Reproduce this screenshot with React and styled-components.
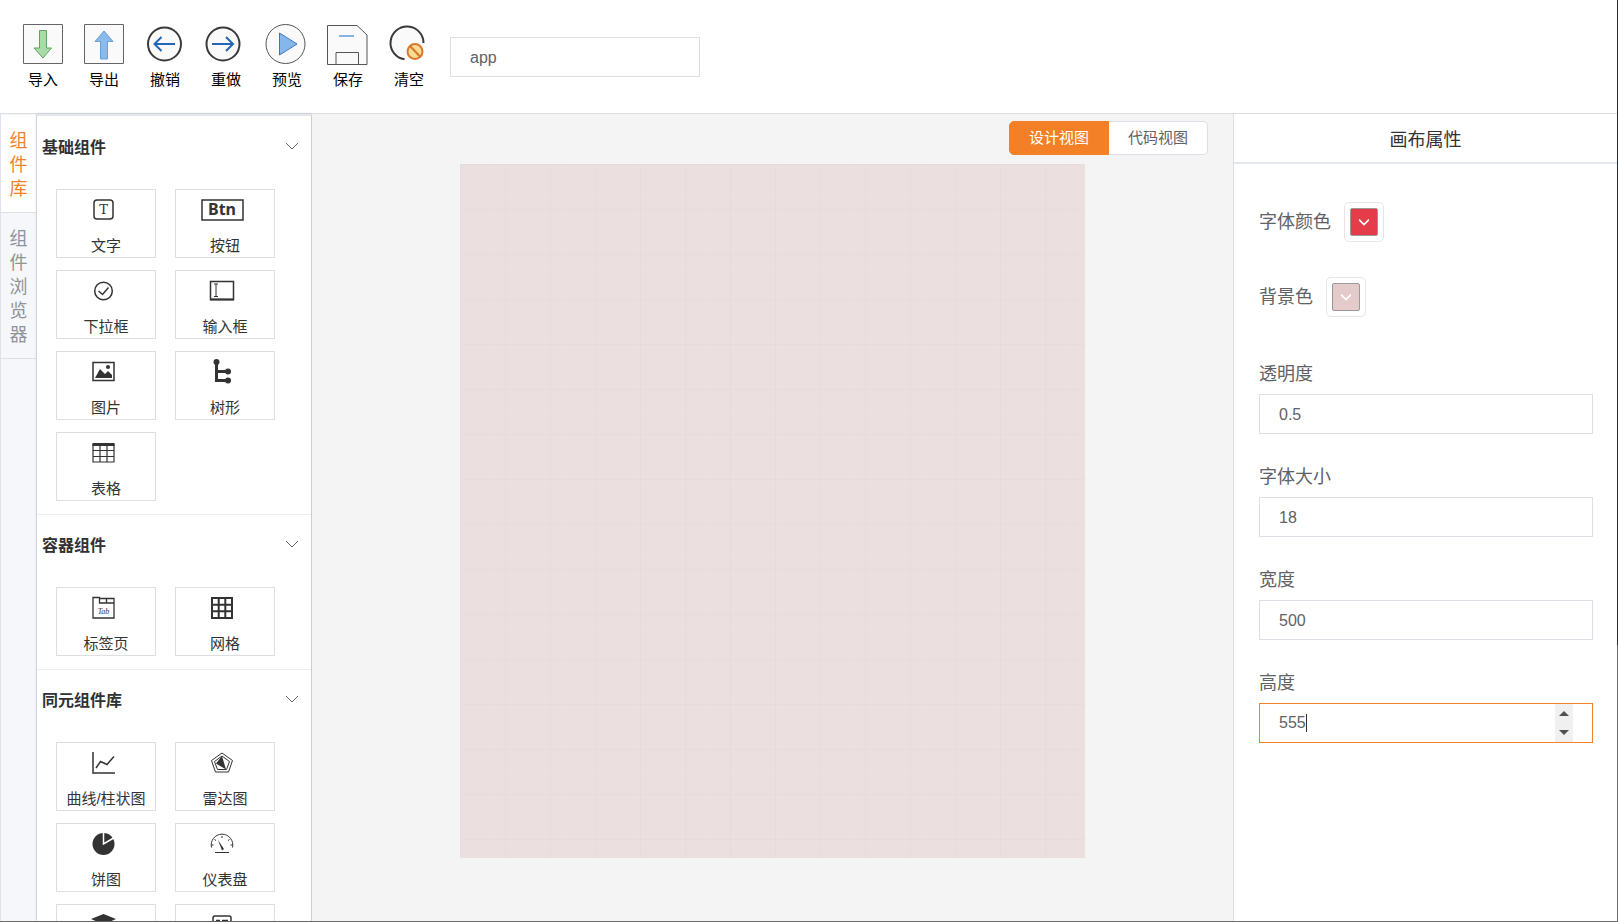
import { useState } from "react";
import styled, { createGlobalStyle } from "styled-components";

const GlobalStyle = createGlobalStyle`
  * {
    box-sizing: border-box;
  }
  body {
    margin: 0;
    overflow: hidden;
    color: #303133;
    font-family: "Liberation Sans", "Noto Sans CJK SC", sans-serif;
  }
  button, input {
    font-family: inherit;
  }
  h2, h3 {
    margin: 0;
  }
`;

const Page = styled.div`
  height: 100vh;
  display: flex;
  flex-direction: column;
  padding: 0 1px 1px 0;
  background: linear-gradient(#1f2d52 70%, #6b6b6b 70%);
`;

const Header = styled.header`
  display: flex;
  align-items: center;
  gap: 21px;
  height: 114px;
  flex-shrink: 0;
  padding: 1px 23px 0;
  background: #fff;
  border-bottom: 1px solid #dcdfe0;
`;

const Toolbar = styled.nav`
  display: flex;
  gap: 21px;
`;

const Tool = styled.button`
  display: flex;
  flex-direction: column;
  align-items: center;
  gap: 5px;
  width: 40px;
  padding: 0;
  border: none;
  background: none;
  color: #000;
  font-size: 15px;
  line-height: 22px;
  white-space: nowrap;
  cursor: pointer;
  svg {
    overflow: visible;
  }
`;

const TextInput = styled.input`
  width: ${({ $width }) => $width || "100%"};
  height: 40px;
  padding: 1px 19px 0;
  border: 1px solid #dcdfe6;
  outline: none;
  background: #fff;
  color: #606266;
  font-size: 16px;
`;

const Main = styled.div`
  flex: 1;
  min-height: 0;
  display: flex;
`;

const SideTabs = styled.div`
  width: 37px;
  flex-shrink: 0;
  padding-top: 1px;
  background: #f5f7fa;
  border-left: 1px solid #dfe2ea;
  border-right: 1px solid #dfe2ea;
`;

const SideTab = styled.button`
  display: block;
  width: 100%;
  padding: 14px 8px 11px;
  border: none;
  border-bottom: 1px solid #dcdfe6;
  background: ${({ $active }) => ($active ? "#fff" : "transparent")};
  color: ${({ $active }) => ($active ? "#f37f27" : "#909399")};
  font-size: 18px;
  line-height: 24px;
  word-break: break-all;
  cursor: pointer;
`;

const Library = styled.aside`
  width: 275px;
  flex-shrink: 0;
  overflow: hidden;
  padding-top: 1px;
  background: #fff;
  border-top: 2px solid #e4e7ed;
  border-right: 1px solid #cfcfd1;
  box-shadow: 0 0 3px rgba(0, 0, 0, 0.15);
`;

const Section = styled.section`
  padding-bottom: 13px;
  border-bottom: 1px solid #ebeef5;
`;

const SectionHead = styled.button`
  display: flex;
  align-items: center;
  justify-content: space-between;
  width: 100%;
  height: 57px;
  padding: 0 13px 0 5px;
  border: none;
  background: none;
  color: #303133;
  font-size: 16px;
  font-weight: 700;
  cursor: pointer;
`;

const Parts = styled.div`
  display: grid;
  grid-template-columns: 100px 100px;
  gap: 12px 19px;
  padding: 15px 0 0 19px;
`;

const Part = styled.button`
  display: flex;
  flex-direction: column;
  justify-content: space-between;
  height: 69px;
  padding: 0;
  border: 1px solid #dcdfe0;
  background: #fff;
  color: #333;
  font-size: 15px;
  line-height: 22px;
  cursor: grab;
`;

const PartIcon = styled.span`
  display: flex;
  align-items: center;
  justify-content: center;
  width: 100%;
  height: 40px;
  padding-right: 6px;
  svg {
    overflow: visible;
  }
`;

const PartLabel = styled.span`
  width: 100%;
  text-align: center;
`;

const Stage = styled.main`
  flex: 1;
  min-width: 0;
  display: flex;
  flex-direction: column;
  align-items: center;
  background: #f4f4f4;
`;

const ViewSwitch = styled.div`
  display: flex;
  align-self: flex-end;
  margin: 7px 25px 9px 0;
`;

const ViewButton = styled.button`
  height: 34px;
  padding: 0 19px;
  border: 1px solid ${({ $active }) => ($active ? "#f37f27" : "#dcdfe6")};
  border-left-width: ${({ $active }) => ($active ? "1px" : "0")};
  border-radius: ${({ $active }) => ($active ? "5px 0 0 5px" : "0 5px 5px 0")};
  background: ${({ $active }) => ($active ? "#f37f27" : "#fff")};
  color: ${({ $active }) => ($active ? "#fff" : "#606266")};
  font-size: 15px;
  line-height: 22px;
  cursor: pointer;
`;

const Canvas = styled.div`
  width: 625px;
  max-width: 100%;
  height: 694px;
  background-color: #ecdfdf;
  background-image: linear-gradient(90deg, #e5dddd 1px, transparent 1px),
    linear-gradient(#e3dddd 1px, transparent 1px),
    linear-gradient(90deg, rgba(225, 218, 218, 0.1) 1px, transparent 1px),
    linear-gradient(rgba(225, 218, 218, 0.1) 1px, transparent 1px);
  background-size: 45px 45px, 45px 45px, 9px 9px, 9px 9px;
`;

const Props = styled.aside`
  width: 384px;
  flex-shrink: 0;
  background: #fff;
  border-left: 1px solid #dcdfe0;
`;

const PropsTitle = styled.h2`
  height: 50px;
  padding-top: 2px;
  border-bottom: 2px solid #e4e7ed;
  color: #303133;
  font-size: 18px;
  font-weight: 400;
  line-height: 48px;
  text-align: center;
`;

const Form = styled.form`
  padding: 38px 24px 0 25px;
`;

const ColorRow = styled.div`
  display: flex;
  align-items: center;
  gap: 13px;
  height: 40px;
  margin-bottom: 35px;
  color: #606266;
  font-size: 18px;
  line-height: 24px;
`;

const Picker = styled.button`
  width: 40px;
  height: 40px;
  padding: 5px;
  border: 1px solid #e6e6e6;
  border-radius: 5px;
  background: #fff;
  cursor: pointer;
`;

const Swatch = styled.span`
  display: flex;
  align-items: center;
  justify-content: center;
  height: 28px;
  border: 1px solid #999;
  border-radius: 2px;
  background: ${({ $color }) => $color};
`;

const Field = styled.div`
  margin-bottom: 21px;
`;

const FieldLabel = styled.label`
  display: block;
  padding-top: 2px;
  color: #606266;
  font-size: 18px;
  line-height: 40px;
`;

const NumberBox = styled.div`
  display: flex;
  align-items: center;
  height: 40px;
  padding: 0 19px;
  border: 1px solid #f37f27;
`;

// the input grows with its value, its right edge is the text cursor
const NumberInput = styled.input`
  field-sizing: content;
  height: 18px;
  margin-right: auto;
  padding: 0;
  border: none;
  border-right: 1px solid #303133;
  outline: none;
  color: #606266;
  caret-color: transparent;
  font-size: 16px;
`;

const Spinner = styled.div`
  display: flex;
  flex-direction: column;
  align-self: stretch;
  width: 18px;
  background: #f0f0f0;
`;

const SpinButton = styled.button`
  flex: 1;
  display: flex;
  align-items: center;
  justify-content: center;
  padding: 0;
  border: none;
  background: none;
`;

const Chevron = ({ size = 12, width = 1, color = "#606266" }) => (
  <svg width={size} height={size} viewBox="0 0 12 12" fill="none" stroke={color} strokeWidth={width}>
    <path d="M0 3l6 6 6-6" />
  </svg>
);

const Icon = ({ width = 24, children }) => (
  <svg
    width={width}
    height="24"
    viewBox={`0 0 ${width} 24`}
    fill="none"
    stroke="#333"
    strokeWidth="1.5"
  >
    {children}
  </svg>
);

const ToolIcon = ({ children }) => (
  <svg width="40" height="40" viewBox="0 0 40 40" fill="none">
    {children}
  </svg>
);

const tools = [
  {
    label: "导入",
    icon: (
      <>
        <path d="M.5.5h39v39H.5z" fill="#fafafa" stroke="#666" />
        <path d="M16.5 6.5h7V24h5L20 34l-9-10h5.5z" fill="#a8dba8" stroke="#5fa663" />
      </>
    ),
  },
  {
    label: "导出",
    icon: (
      <>
        <path d="M.5.5h39v39H.5z" fill="#fafafa" stroke="#666" />
        <path d="M16.5 35h7V17.5h5.5L20 7l-9 10.5h5.5z" fill="#8abaea" stroke="#6a9fd6" />
      </>
    ),
  },
  {
    label: "撤销",
    icon: (
      <>
        <circle cx="19.5" cy="20" r="16.5" fill="#fafafa" stroke="#3a3a3a" strokeWidth="2" />
        <path d="M30 20H9.5M16.500 13l-7 7 7 7" stroke="#2366b5" strokeWidth="2" />
      </>
    ),
  },
  {
    label: "重做",
    icon: (
      <>
        <circle cx="17" cy="20" r="16.5" fill="#fafafa" stroke="#3a3a3a" strokeWidth="2" />
        <path d="M6 20h21M20 13l7 7-7 7" stroke="#2366b5" strokeWidth="2" />
      </>
    ),
  },
  {
    label: "预览",
    icon: (
      <>
        <circle cx="18.5" cy="20" r="19.5" fill="#fafafa" stroke="#555" />
        <path d="M12.5 9v22L30 20z" fill="#86b7ea" stroke="#3a78c2" />
      </>
    ),
  },
  {
    label: "保存",
    icon: (
      <>
        <path d="M-.5 1.5H29l10 9.500v29.500H-.5z" fill="#fafafa" stroke="#555" />
        <path d="M8 40V28.500h22.500V40" stroke="#555" />
        <path d="M11 12h15" stroke="#86b4de" strokeWidth="2" />
      </>
    ),
  },
  {
    label: "清空",
    icon: (
      <>
        <circle cx="18" cy="19" r="16.5" fill="#fafafa" />
        <path d="M34.5 19A16.500 16.500 0 1 0 15.500 35.300" stroke="#3a3a3a" strokeWidth="2" />
        <circle cx="26" cy="27.5" r="9.5" fill="#fff" />
        <circle cx="26" cy="27.5" r="7.5" fill="#f7dc96" stroke="#d9772a" strokeWidth="2" />
        <path d="M21 22l10.500 11" stroke="#d9772a" strokeWidth="2" />
      </>
    ),
  },
];

const sections = [
  {
    title: "基础组件",
    parts: [
      {
        label: "文字",
        icon: (
          <Icon>
            <rect x="3" y="2" width="19" height="19" rx="3" />
            <text x="12.5" y="16" textAnchor="middle" fontSize="13" fontFamily="DejaVu Serif" fill="#333" stroke="none">
              T
            </text>
          </Icon>
        ),
      },
      {
        label: "按钮",
        icon: (
          <Icon width={44}>
            <rect x="2" y="2" width="41" height="20" />
            <text x="22" y="17" textAnchor="middle" fontSize="16" fontWeight="700" fontFamily="Noto Sans" fill="#333" stroke="none">
              Btn
            </text>
          </Icon>
        ),
      },
      {
        label: "下拉框",
        icon: (
          <Icon>
            <circle cx="12.5" cy="12" r="8.8" />
            <path d="M7.5 12l4 3.500 6-7" />
          </Icon>
        ),
      },
      {
        label: "输入框",
        icon: (
          <Icon width={26}>
            <path d="M1.5 2.5h23v18h-23z" />
            <path d="M1 20.5h24" strokeWidth="2" />
            <path d="M5 5h4M5 17.500h4M7 5v12.500" strokeWidth="1" />
          </Icon>
        ),
      },
      {
        label: "图片",
        icon: (
          <Icon>
            <path d="M2 2.500h21v18H2z" />
            <path d="M4 18l5-9 5 5 3-3 4 4v3z" fill="#333" stroke="none" />
            <circle cx="17" cy="7" r="2" fill="#333" stroke="none" />
          </Icon>
        ),
      },
      {
        label: "树形",
        icon: (
          <Icon>
            <path d="M6.500 2v18.500h11M6.500 11.500h11" strokeWidth="3" />
            <g fill="#333" stroke="none">
              <circle cx="6.500" cy="2" r="3" />
              <circle cx="18" cy="11.500" r="3" />
              <circle cx="18" cy="20.500" r="3" />
            </g>
          </Icon>
        ),
      },
      {
        label: "表格",
        icon: (
          <Icon>
            <path d="M1.500 3.500h22" strokeWidth="3" />
            <path d="M2 3v18h21V3M2 9.500h21M2 15.500h21M9 3v18M16 3v18" strokeWidth="1.200" />
          </Icon>
        ),
      },
    ],
  },
  {
    title: "容器组件",
    parts: [
      {
        label: "标签页",
        icon: (
          <Icon>
            <path d="M2 1.500h6.500v5.500H23V22H2zM8.500 2.500H23V7M15.500 2.500V7" strokeWidth="1.300" />
            <text x="12.500" y="18" textAnchor="middle" fontSize="8" fontStyle="italic" fontFamily="Liberation Serif" fill="#333" stroke="none">
              Tab
            </text>
          </Icon>
        ),
      },
      {
        label: "网格",
        icon: (
          <Icon>
            <path d="M2 2h20v20H2zM8.700 2v20M15.300 2v20M2 8.700h20M2 15.300h20" strokeWidth="2" />
          </Icon>
        ),
      },
    ],
  },
  {
    title: "同元组件库",
    parts: [
      {
        label: "曲线/柱状图",
        icon: (
          <Icon>
            <path d="M2 1v21h22M5 17l4.500-6.500 6.500 3 7-8" />
          </Icon>
        ),
      },
      {
        label: "雷达图",
        icon: (
          <Icon>
            <path d="M12 2l10.500 7.500L18.500 21h-13L1.500 9.500z" strokeWidth="1" />
            <path d="M12 5l7.500 5.500-3 8h-9l-3-8z" strokeWidth="1" />
            <path d="M12 5l4 13.500L6 12.500z" fill="#333" stroke="none" />
          </Icon>
        ),
      },
      {
        label: "饼图",
        icon: (
          <Icon>
            <circle cx="12.500" cy="12" r="11" fill="#333" stroke="none" />
            <path d="M12.500 0v12l11-6.500" stroke="#fff" strokeWidth="1.500" />
          </Icon>
        ),
      },
      {
        label: "仪表盘",
        icon: (
          <Icon>
            <path d="M1.500 15.500a10.800 10.800 0 1 1 21 0M5 20.500h14" strokeWidth="1" />
            <path d="M12 4v2M4.500 7.500l1.500 1M19.500 7.500l-1.500 1M1.500 13h2M20.500 13h2" strokeWidth="1" />
            <path d="M8 8l6 9-2 1.500z" fill="#333" stroke="none" />
          </Icon>
        ),
      },
      {
        name: "layers",
        icon: (
          <Icon>
            <path d="M12.500 1L25 6l-12.500 5.500L0 6zM0 10l12.500 6L25 10v2.500l-12.500 6L0 12.500z" fill="#333" stroke="none" />
          </Icon>
        ),
      },
      {
        name: "list",
        icon: (
          <Icon>
            <rect x="3" y="3" width="18" height="18" rx="2" />
            <path d="M6 7.500h4M12 7.500h6M8 8v10M12 12h6" />
          </Icon>
        ),
      },
    ],
  },
];

const colors = [
  { id: "fontColor", label: "字体颜色", color: "#e43d49" },
  { id: "background", label: "背景色", color: "#e4caca" },
];

const fields = [
  { id: "opacity", label: "透明度" },
  { id: "fontSize", label: "字体大小" },
  { id: "width", label: "宽度" },
];

export default function App() {
  const [name, setName] = useState("app");
  const [tab, setTab] = useState("组件库");
  const [view, setView] = useState("设计视图");
  const [values, setValues] = useState({
    opacity: "0.5",
    fontSize: "18",
    width: "500",
    height: "555",
  });

  const change = (id, value) => setValues((prev) => ({ ...prev, [id]: value }));
  const step = (n) => change("height", String(Number(values.height) + n));

  return (
    <>
      <GlobalStyle />
      <Page>
        <Header>
          <Toolbar>
            {tools.map((tool) => (
              <Tool key={tool.label} type="button">
                <ToolIcon>{tool.icon}</ToolIcon>
                {tool.label}
              </Tool>
            ))}
          </Toolbar>
          <TextInput
            $width="250px"
            aria-label="name"
            value={name}
            onChange={(e) => setName(e.target.value)}
          />
        </Header>

        <Main>
          <SideTabs>
            {["组件库", "组件浏览器"].map((text) => (
              <SideTab
                key={text}
                type="button"
                $active={tab === text}
                onClick={() => setTab(text)}
              >
                {text}
              </SideTab>
            ))}
          </SideTabs>

          <Library>
            {sections.map((section) => (
              <Section key={section.title}>
                <SectionHead type="button">
                  {section.title}
                  <Chevron />
                </SectionHead>
                <Parts>
                  {section.parts.map((part) => (
                    <Part
                      key={part.label || part.name}
                      type="button"
                      aria-label={part.label || part.name}
                    >
                      <PartIcon>{part.icon}</PartIcon>
                      {part.label && <PartLabel>{part.label}</PartLabel>}
                    </Part>
                  ))}
                </Parts>
              </Section>
            ))}
          </Library>

          <Stage>
            <ViewSwitch>
              {["设计视图", "代码视图"].map((text) => (
                <ViewButton
                  key={text}
                  type="button"
                  $active={view === text}
                  onClick={() => setView(text)}
                >
                  {text}
                </ViewButton>
              ))}
            </ViewSwitch>
            <Canvas />
          </Stage>

          <Props>
            <PropsTitle>画布属性</PropsTitle>
            <Form>
              {colors.map((item) => (
                <ColorRow key={item.id}>
                  <label htmlFor={item.id}>{item.label}</label>
                  <Picker id={item.id} type="button">
                    <Swatch $color={item.color}>
                      <Chevron size={10} width={2} color="#fff" />
                    </Swatch>
                  </Picker>
                </ColorRow>
              ))}
              {fields.map((field) => (
                <Field key={field.id}>
                  <FieldLabel htmlFor={field.id}>{field.label}</FieldLabel>
                  <TextInput
                    id={field.id}
                    value={values[field.id]}
                    onChange={(e) => change(field.id, e.target.value)}
                  />
                </Field>
              ))}
              <Field>
                <FieldLabel htmlFor="height">高度</FieldLabel>
                <NumberBox>
                  <NumberInput
                    id="height"
                    inputMode="numeric"
                    value={values.height}
                    onChange={(e) => change("height", e.target.value)}
                  />
                  <Spinner>
                    <SpinButton type="button" aria-label="+" onClick={() => step(1)}>
                      <svg width="10" height="5" viewBox="0 0 10 5">
                        <path d="M0 5l5-5 5 5z" fill="#505050" />
                      </svg>
                    </SpinButton>
                    <SpinButton type="button" aria-label="-" onClick={() => step(-1)}>
                      <svg width="10" height="5" viewBox="0 0 10 5">
                        <path d="M0 0l5 5 5-5z" fill="#505050" />
                      </svg>
                    </SpinButton>
                  </Spinner>
                </NumberBox>
              </Field>
            </Form>
          </Props>
        </Main>
      </Page>
    </>
  );
}
